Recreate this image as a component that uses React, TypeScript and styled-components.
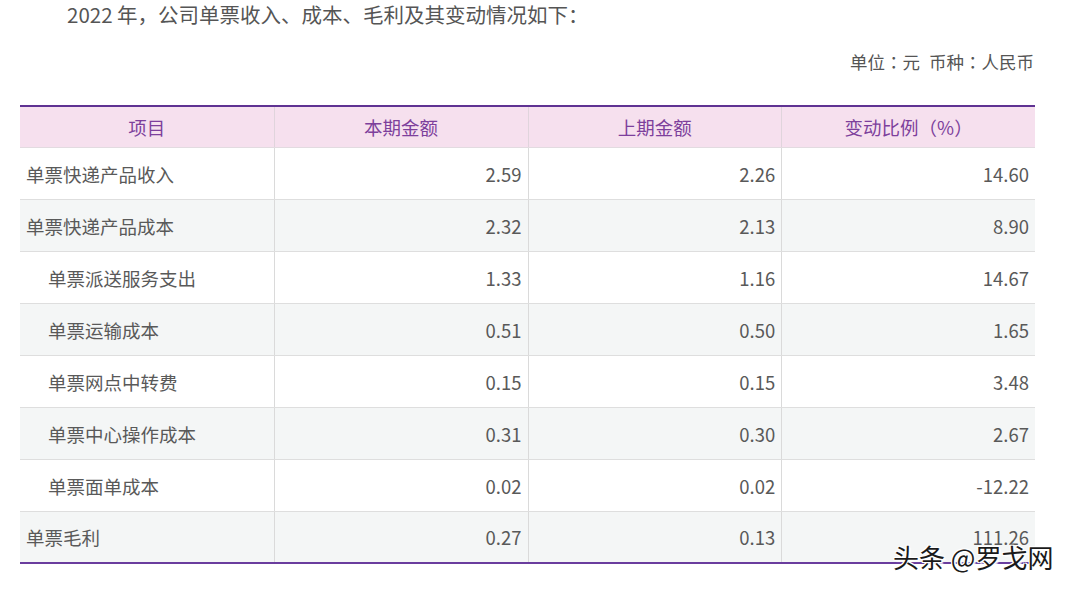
import React from "react";
import styled, { createGlobalStyle } from "styled-components";

const GlobalStyle = createGlobalStyle`
  html, body {
    margin: 0;
    padding: 0;
    background: #ffffff;
  }
  body {
    font-family: "Noto Sans CJK SC", "Noto Sans", sans-serif;
    color: #595959;
  }
`;

interface RowData {
  name: string;
  cur: string;
  prev: string;
  ratio: string;
  indent?: boolean;
}

const rows: RowData[] = [
  { name: "单票快递产品收入", cur: "2.59", prev: "2.26", ratio: "14.60" },
  { name: "单票快递产品成本", cur: "2.32", prev: "2.13", ratio: "8.90" },
  { name: "单票派送服务支出", cur: "1.33", prev: "1.16", ratio: "14.67", indent: true },
  { name: "单票运输成本", cur: "0.51", prev: "0.50", ratio: "1.65", indent: true },
  { name: "单票网点中转费", cur: "0.15", prev: "0.15", ratio: "3.48", indent: true },
  { name: "单票中心操作成本", cur: "0.31", prev: "0.30", ratio: "2.67", indent: true },
  { name: "单票面单成本", cur: "0.02", prev: "0.02", ratio: "-12.22", indent: true },
  { name: "单票毛利", cur: "0.27", prev: "0.13", ratio: "111.26" },
];

const App = () => {
  return (
    <Page>
      <GlobalStyle />
      <Title>2022 年，公司单票收入、成本、毛利及其变动情况如下：</Title>
      <Unit>
        单位<Colon>：</Colon>元<Gap />币种<Colon>：</Colon>人民币
      </Unit>
      <Table>
        <HeadRow>
          <HeadCell>项目</HeadCell>
          <HeadCell>本期金额</HeadCell>
          <HeadCell>上期金额</HeadCell>
          <HeadCell>变动比例（%）</HeadCell>
        </HeadRow>
        {rows.map((r, i) => (
          <BodyRow key={r.name} striped={i % 2 === 1} last={i === rows.length - 1}>
            <NameCell indent={r.indent}>{r.name}</NameCell>
            <NumCell>{r.cur}</NumCell>
            <NumCell>{r.prev}</NumCell>
            <NumCell>{r.ratio}</NumCell>
          </BodyRow>
        ))}
      </Table>
      <Watermark>头条 @罗戈网</Watermark>
    </Page>
  );
};

const Page = styled.div`
  position: relative;
  width: 1080px;
  height: 591px;
  padding: 0 45px 0 20px;
  box-sizing: border-box;
  overflow: hidden;
`;

const Title = styled.div`
  margin-left: 47px;
  font-size: 20.5px;
  line-height: 28px;
  color: #555555;
`;

const Unit = styled.div`
  margin-top: 22px;
  text-align: right;
  font-size: 17.5px;
  line-height: 24px;
  color: #555555;
  padding-right: 1px;
`;

const Colon = styled.span`
  font-family: "Noto Sans CJK TC", "Noto Sans CJK SC", sans-serif;
`;

const Gap = styled.span`
  display: inline-block;
  width: 9px;
`;

const Table = styled.div`
  margin-top: 31px;
  width: 1015px;
  border-top: 2px solid #5f3292;
  border-bottom: 2px solid #6a3d9e;
`;

const HeadRow = styled.div`
  display: grid;
  grid-template-columns: repeat(4, 1fr);
  height: 41px;
  box-sizing: border-box;
  background: #f6e0ee;
  border-bottom: 1px solid #e2dbe0;
`;

const HeadCell = styled.div`
  display: flex;
  align-items: center;
  justify-content: center;
  font-size: 18.5px;
  color: #7d3f9c;
  & + & {
    border-left: 1px solid #e0d4dc;
  }
`;

const BodyRow = styled.div<{ striped?: boolean; last?: boolean }>`
  display: grid;
  grid-template-columns: repeat(4, 1fr);
  height: ${({ last }) => (last ? "50px" : "52px")};
  box-sizing: border-box;
  background: ${({ striped }) => (striped ? "#f4f6f6" : "#ffffff")};
  border-bottom: ${({ last }) => (last ? "none" : "1px solid #dedede")};
`;

const NameCell = styled.div<{ indent?: boolean }>`
  display: flex;
  align-items: center;
  padding-left: ${({ indent }) => (indent ? "28px" : "6px")};
  font-size: 18.5px;
  color: #595959;
`;

const NumCell = styled.div`
  display: flex;
  align-items: center;
  justify-content: flex-end;
  padding-right: 6px;
  font-size: 18.5px;
  color: #595959;
  border-left: 1px solid #dadada;
`;

const Watermark = styled.div`
  position: absolute;
  left: 893px;
  top: 542px;
  font-size: 26px;
  line-height: 30px;
  color: #1a1a1a;
  white-space: nowrap;
  text-shadow: 1px 1px 0 #ffffff, -1px -1px 0 #ffffff, 1px -1px 0 #ffffff,
    -1px 1px 0 #ffffff, 2px 2px 1px rgba(255, 255, 255, 0.8);
`;

export default App;
